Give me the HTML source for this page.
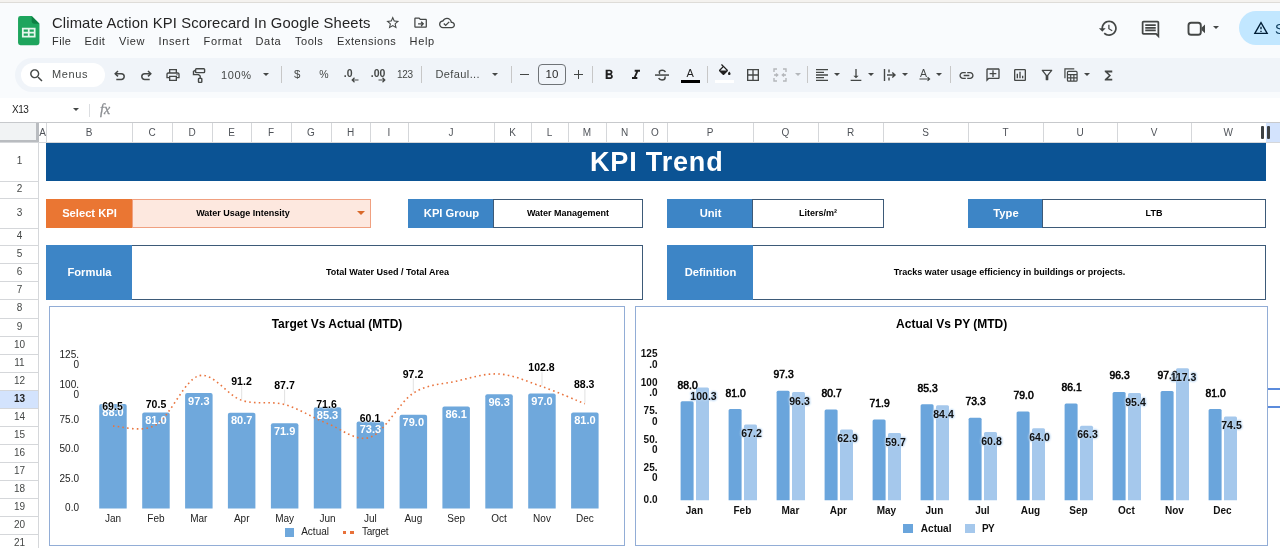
<!DOCTYPE html><html><head><meta charset="utf-8"><title>Climate Action KPI Scorecard</title><style>
*{box-sizing:border-box;margin:0;padding:0}
html,body{width:1280px;height:548px;overflow:hidden;background:#fff}
body{font-family:"Liberation Sans",sans-serif;color:#1f1f1f;position:relative}
.a{position:absolute}
.t{position:absolute;white-space:nowrap;line-height:1}
.c{transform:translateX(-50%)}
svg{position:absolute;overflow:visible}
.menu{font-size:14px;color:#1f1f1f;top:34px;letter-spacing:-0.2px}
.ch{font-size:10px;color:#50545a;top:127.500px}
.rh{font-size:10px;color:#444746;left:0;width:39px;text-align:center}
.lbl{color:#fff;font-weight:bold;font-size:11.200px;padding-bottom:1.500px;padding-left:1px;text-align:center;display:flex;align-items:center;justify-content:center;background:#3d85c6}
.val{font-weight:bold;font-size:9px;color:#000;display:flex;align-items:center;justify-content:center;background:#fff;border:1px solid #3d5a78;padding-bottom:1px}
</style></head><body><div id="root" style="position:absolute;left:0;top:0;width:1280px;height:548px;will-change:transform">
<div class="a" style="left:0;top:0;width:1280px;height:98px;background:#f9fbfd"></div>
<div class="a" style="left:0;top:0;width:1280px;height:2px;background:#f4f2ef"></div>
<div class="a" style="left:0;top:2px;width:1280px;height:1px;background:#dedcd8"></div>
<svg style="left:18px;top:16.400px" width="21.500" height="29.200" viewBox="0 0 22 30">
<path d="M2.500 0H14l8 8v19.500a2.500 2.500 0 0 1-2.500 2.500h-17A2.500 2.500 0 0 1 0 27.500V2.500A2.500 2.500 0 0 1 2.500 0z" fill="#1ea55d"/>
<path d="M14 0l8 8h-5.500A2.500 2.500 0 0 1 14 5.500z" fill="#0d8043"/>
<path d="M4 12h14v10H4zM5.800 13.800v2.300h4.300v-2.300zM11.900 13.800v2.300h4.300v-2.300zM5.800 17.900v2.300h4.300v-2.300zM11.900 17.900v2.300h4.300v-2.300z" fill="#e6f6ec" fill-rule="evenodd"/>
</svg>
<div class="t" style="left:52px;top:15.57px;font-size:14.8px;color:#242424;letter-spacing:0.131px;">Climate Action KPI Scorecard In Google Sheets</div>
<div class="t" style="left:52px;top:36.29px;font-size:11px;color:#303030;letter-spacing:0.419px;">File</div>
<div class="t" style="left:84.5px;top:36.29px;font-size:11px;color:#303030;letter-spacing:0.486px;">Edit</div>
<div class="t" style="left:119px;top:36.29px;font-size:11px;color:#303030;letter-spacing:0.564px;">View</div>
<div class="t" style="left:158.5px;top:36.29px;font-size:11px;color:#303030;letter-spacing:0.648px;">Insert</div>
<div class="t" style="left:203.5px;top:36.29px;font-size:11px;color:#303030;letter-spacing:0.677px;">Format</div>
<div class="t" style="left:255.5px;top:36.29px;font-size:11px;color:#303030;letter-spacing:0.666px;">Data</div>
<div class="t" style="left:295px;top:36.29px;font-size:11px;color:#303030;letter-spacing:0.544px;">Tools</div>
<div class="t" style="left:337px;top:36.29px;font-size:11px;color:#303030;letter-spacing:0.559px;">Extensions</div>
<div class="t" style="left:409.5px;top:36.29px;font-size:11px;color:#303030;letter-spacing:0.694px;">Help</div>
<div class="a" style="left:15px;top:57.500px;width:1300px;height:34px;border-radius:17px;background:#f0f4f9"></div>
<div class="a" style="left:21px;top:62.500px;width:84px;height:24px;border-radius:12px;background:#fff"></div>
<div class="t" style="left:52px;top:69.49px;font-size:11px;color:#444746;letter-spacing:0.597px;">Menus</div>
<div class="a" style="left:0;top:98px;width:1280px;height:24px;background:#fff"></div>
<div class="t" style="left:12px;top:104.53px;font-size:10px;color:#1f1f1f;letter-spacing:-0.431px;">X13</div>
<div class="a" style="left:72.500px;top:108px;width:0;height:0;border-left:3px solid transparent;border-right:3px solid transparent;border-top:3px solid #444746"></div>
<div class="a" style="left:89px;top:104px;width:1px;height:13px;background:#dcdee1"></div>
<div class="t" style="left:100px;top:103px;font-size:14px;color:#8a8d91;font-style:italic;-webkit-text-stroke:0.300px #8a8d91;font-family:'Liberation Serif',serif">fx</div>
<div class="a" style="left:0;top:122px;width:1280px;height:1px;background:#c7c9cc"></div>
<div class="a" style="left:0;top:123px;width:1280px;height:19px;background:#fff"></div>
<div class="a" style="left:0;top:123px;width:36px;height:19px;background:#f1f3f4"></div>
<div class="a" style="left:36px;top:123px;width:3px;height:20px;background:#b9bcc0"></div>
<div class="a" style="left:0;top:140px;width:38px;height:3px;background:#b9bcc0"></div>
<div class="a" style="left:0;top:142px;width:1280px;height:1px;background:#d5d7da"></div>
<div class="t ch c" style="left:42.5px">A</div>
<div class="a" style="left:46px;top:123px;width:1px;height:19px;background:#d5d7da"></div>
<div class="t ch c" style="left:89.0px">B</div>
<div class="a" style="left:132px;top:123px;width:1px;height:19px;background:#d5d7da"></div>
<div class="t ch c" style="left:152.0px">C</div>
<div class="a" style="left:172px;top:123px;width:1px;height:19px;background:#d5d7da"></div>
<div class="t ch c" style="left:192.0px">D</div>
<div class="a" style="left:212px;top:123px;width:1px;height:19px;background:#d5d7da"></div>
<div class="t ch c" style="left:231.5px">E</div>
<div class="a" style="left:251px;top:123px;width:1px;height:19px;background:#d5d7da"></div>
<div class="t ch c" style="left:271.0px">F</div>
<div class="a" style="left:291px;top:123px;width:1px;height:19px;background:#d5d7da"></div>
<div class="t ch c" style="left:311.0px">G</div>
<div class="a" style="left:331px;top:123px;width:1px;height:19px;background:#d5d7da"></div>
<div class="t ch c" style="left:350.5px">H</div>
<div class="a" style="left:370px;top:123px;width:1px;height:19px;background:#d5d7da"></div>
<div class="t ch c" style="left:389.0px">I</div>
<div class="a" style="left:408px;top:123px;width:1px;height:19px;background:#d5d7da"></div>
<div class="t ch c" style="left:451.0px">J</div>
<div class="a" style="left:494px;top:123px;width:1px;height:19px;background:#d5d7da"></div>
<div class="t ch c" style="left:512.5px">K</div>
<div class="a" style="left:531px;top:123px;width:1px;height:19px;background:#d5d7da"></div>
<div class="t ch c" style="left:549.5px">L</div>
<div class="a" style="left:568px;top:123px;width:1px;height:19px;background:#d5d7da"></div>
<div class="t ch c" style="left:587.0px">M</div>
<div class="a" style="left:606px;top:123px;width:1px;height:19px;background:#d5d7da"></div>
<div class="t ch c" style="left:624.5px">N</div>
<div class="a" style="left:643px;top:123px;width:1px;height:19px;background:#d5d7da"></div>
<div class="t ch c" style="left:655.0px">O</div>
<div class="a" style="left:667px;top:123px;width:1px;height:19px;background:#d5d7da"></div>
<div class="t ch c" style="left:710.0px">P</div>
<div class="a" style="left:753px;top:123px;width:1px;height:19px;background:#d5d7da"></div>
<div class="t ch c" style="left:785.5px">Q</div>
<div class="a" style="left:818px;top:123px;width:1px;height:19px;background:#d5d7da"></div>
<div class="t ch c" style="left:850.5px">R</div>
<div class="a" style="left:883px;top:123px;width:1px;height:19px;background:#d5d7da"></div>
<div class="t ch c" style="left:925.5px">S</div>
<div class="a" style="left:968px;top:123px;width:1px;height:19px;background:#d5d7da"></div>
<div class="t ch c" style="left:1005.5px">T</div>
<div class="a" style="left:1043px;top:123px;width:1px;height:19px;background:#d5d7da"></div>
<div class="t ch c" style="left:1080.0px">U</div>
<div class="a" style="left:1117px;top:123px;width:1px;height:19px;background:#d5d7da"></div>
<div class="t ch c" style="left:1154.0px">V</div>
<div class="a" style="left:1191px;top:123px;width:1px;height:19px;background:#d5d7da"></div>
<div class="t ch c" style="left:1228.25px">W</div>
<div class="a" style="left:1265.5px;top:123px;width:1px;height:19px;background:#d5d7da"></div>
<div class="a" style="left:1265.500px;top:123px;width:15px;height:19px;background:#d3e3fd"></div>
<div class="a" style="left:1260.800px;top:126px;width:2.800px;height:12.500px;background:#3c4043;border-radius:1px"></div>
<div class="a" style="left:1266.700px;top:126px;width:2.900px;height:12.500px;background:#3c4043;border-radius:1px"></div>
<div class="a" style="left:38px;top:143px;width:1px;height:405px;background:#d5d7da"></div>
<div class="t rh" style="top:156.0px;">1</div>
<div class="a" style="left:0;top:181px;width:38px;height:1px;background:#d5d7da"></div>
<div class="t rh" style="top:184.0px;">2</div>
<div class="a" style="left:0;top:198px;width:38px;height:1px;background:#d5d7da"></div>
<div class="t rh" style="top:207.5px;">3</div>
<div class="a" style="left:0;top:228px;width:38px;height:1px;background:#d5d7da"></div>
<div class="t rh" style="top:231.0px;">4</div>
<div class="a" style="left:0;top:245px;width:38px;height:1px;background:#d5d7da"></div>
<div class="t rh" style="top:248.5px;">5</div>
<div class="a" style="left:0;top:263px;width:38px;height:1px;background:#d5d7da"></div>
<div class="t rh" style="top:266.5px;">6</div>
<div class="a" style="left:0;top:281px;width:38px;height:1px;background:#d5d7da"></div>
<div class="t rh" style="top:284.5px;">7</div>
<div class="a" style="left:0;top:299px;width:38px;height:1px;background:#d5d7da"></div>
<div class="t rh" style="top:303.0px;">8</div>
<div class="a" style="left:0;top:318px;width:38px;height:1px;background:#d5d7da"></div>
<div class="t rh" style="top:321.5px;">9</div>
<div class="a" style="left:0;top:336px;width:38px;height:1px;background:#d5d7da"></div>
<div class="t rh" style="top:339.5px;">10</div>
<div class="a" style="left:0;top:354px;width:38px;height:1px;background:#d5d7da"></div>
<div class="t rh" style="top:357.5px;">11</div>
<div class="a" style="left:0;top:372px;width:38px;height:1px;background:#d5d7da"></div>
<div class="t rh" style="top:375.5px;">12</div>
<div class="a" style="left:0;top:390px;width:38px;height:1px;background:#d5d7da"></div>
<div class="a" style="left:0;top:391px;width:38px;height:17px;background:#d3e3fd"></div>
<div class="t rh" style="top:393.5px;font-weight:bold;color:#1f1f1f;">13</div>
<div class="a" style="left:0;top:408px;width:38px;height:1px;background:#d5d7da"></div>
<div class="t rh" style="top:411.5px;">14</div>
<div class="a" style="left:0;top:426px;width:38px;height:1px;background:#d5d7da"></div>
<div class="t rh" style="top:429.5px;">15</div>
<div class="a" style="left:0;top:444px;width:38px;height:1px;background:#d5d7da"></div>
<div class="t rh" style="top:447.5px;">16</div>
<div class="a" style="left:0;top:462px;width:38px;height:1px;background:#d5d7da"></div>
<div class="t rh" style="top:465.5px;">17</div>
<div class="a" style="left:0;top:480px;width:38px;height:1px;background:#d5d7da"></div>
<div class="t rh" style="top:483.5px;">18</div>
<div class="a" style="left:0;top:498px;width:38px;height:1px;background:#d5d7da"></div>
<div class="t rh" style="top:501.5px;">19</div>
<div class="a" style="left:0;top:516px;width:38px;height:1px;background:#d5d7da"></div>
<div class="t rh" style="top:519.5px;">20</div>
<div class="a" style="left:0;top:534px;width:38px;height:1px;background:#d5d7da"></div>
<div class="t rh" style="top:537.5px;">21</div>
<div class="a" style="left:0;top:552px;width:38px;height:1px;background:#d5d7da"></div>
<div class="a" style="left:46px;top:143px;width:1220px;height:38px;background:#0b5394"></div>
<div class="t" style="left:590px;top:149.14px;font-size:27px;color:#fff;font-weight:bold;letter-spacing:0.831px;">KPI Trend</div>
<div class="a lbl" style="left:46px;top:199px;width:86px;height:29px;background:#ea7633">Select KPI</div>
<div class="a val" style="left:132px;top:199px;width:239px;height:29px;background:#fde8df;border-color:#f0a080;padding-right:17px">Water Usage Intensity</div>
<div class="a" style="left:357px;top:211px;width:0;height:0;border-left:4px solid transparent;border-right:4px solid transparent;border-top:4px solid #d9692a"></div>
<div class="a lbl" style="left:408px;top:199px;width:86px;height:29px">KPI Group</div>
<div class="a val" style="left:493px;top:199px;width:150px;height:29px">Water Management</div>
<div class="a lbl" style="left:667px;top:199px;width:86px;height:29px">Unit</div>
<div class="a val" style="left:752px;top:199px;width:132px;height:29px">Liters/m²</div>
<div class="a lbl" style="left:968px;top:199px;width:75px;height:29px">Type</div>
<div class="a val" style="left:1042px;top:199px;width:224px;height:29px">LTB</div>
<div class="a val" style="left:46px;top:245px;width:597px;height:55px;padding-left:86px">Total Water Used / Total Area</div>
<div class="a lbl" style="left:46px;top:245px;width:86px;height:55px">Formula</div>
<div class="a val" style="left:667px;top:245px;width:599px;height:55px;padding-left:86px">Tracks water usage efficiency in buildings or projects.</div>
<div class="a lbl" style="left:667px;top:245px;width:86px;height:55px">Definition</div>
<div class="a" style="left:1267px;top:388px;width:13px;height:2px;background:#5b8bdc"></div>
<div class="a" style="left:1267px;top:406px;width:13px;height:2px;background:#5b8bdc"></div>
<div class="a" style="left:49px;top:306px;width:576px;height:240px;background:#fff;border:1px solid #92add6"></div>
<div class="t c" style="left:337px;top:318px;font-size:12px;font-weight:bold;color:#000">Target Vs Actual (MTD)</div>
<div class="t" style="left:56px;width:23px;text-align:right;top:350.1px;font-size:10px;line-height:10px;color:#222">125.<br>0</div>
<div class="t" style="left:56px;width:23px;text-align:right;top:379.6px;font-size:10px;line-height:10px;color:#222">100.<br>0</div>
<div class="t" style="left:56px;width:23px;text-align:right;top:415.1px;font-size:10px;line-height:10px;color:#222">75.0</div>
<div class="t" style="left:56px;width:23px;text-align:right;top:443.6px;font-size:10px;line-height:10px;color:#222">50.0</div>
<div class="t" style="left:56px;width:23px;text-align:right;top:474.1px;font-size:10px;line-height:10px;color:#222">25.0</div>
<div class="t" style="left:56px;width:23px;text-align:right;top:503.4px;font-size:10px;line-height:10px;color:#222">0.0</div>
<svg style="left:0;top:0" width="1280" height="548" viewBox="0 0 1280 548"><path d="M99.2 508.5V406.1q0 -2 2 -2h23.5q2 0 2 2V508.5z" fill="#6fa8dc"/><path d="M142.2 508.5V414.4q0 -2 2 -2h23.5q2 0 2 2V508.5z" fill="#6fa8dc"/><path d="M185.1 508.5V395.1q0 -2 2 -2h23.5q2 0 2 2V508.5z" fill="#6fa8dc"/><path d="M227.9 508.5V414.8q0 -2 2 -2h23.5q2 0 2 2V508.5z" fill="#6fa8dc"/><path d="M270.9 508.5V425.2q0 -2 2 -2h23.5q2 0 2 2V508.5z" fill="#6fa8dc"/><path d="M313.8 508.5V409.3q0 -2 2 -2h23.5q2 0 2 2V508.5z" fill="#6fa8dc"/><path d="M356.6 508.5V423.6q0 -2 2 -2h23.5q2 0 2 2V508.5z" fill="#6fa8dc"/><path d="M399.6 508.5V416.8q0 -2 2 -2h23.5q2 0 2 2V508.5z" fill="#6fa8dc"/><path d="M442.4 508.5V408.4q0 -2 2 -2h23.5q2 0 2 2V508.5z" fill="#6fa8dc"/><path d="M485.3 508.5V396.3q0 -2 2 -2h23.5q2 0 2 2V508.5z" fill="#6fa8dc"/><path d="M528.2 508.5V395.5q0 -2 2 -2h23.5q2 0 2 2V508.5z" fill="#6fa8dc"/><path d="M571.1 508.5V414.4q0 -2 2 -2h23.5q2 0 2 2V508.5z" fill="#6fa8dc"/><path d="M113.0 426.1C120.2 425.9 141.6 433.3 155.9 424.9C170.2 416.5 184.5 379.9 198.8 375.8C213.1 371.7 227.4 395.6 241.7 400.3C256.0 405.1 270.3 400.6 284.6 404.5C298.9 408.4 313.2 418.1 327.5 423.6C341.8 429.0 356.1 442.3 370.4 437.2C384.7 432.2 399.0 402.6 413.3 393.2C427.6 383.9 441.9 384.4 456.2 381.2C470.5 378.0 484.8 373.1 499.1 374.0C513.4 374.9 527.7 381.6 542.0 386.6C556.3 391.5 577.8 400.9 584.9 403.8" fill="none" stroke="#e9753f" stroke-width="1.600" stroke-dasharray="1.600 3.200"/><path d="M241.7 399.3V385.3" stroke="#d9d9d9" stroke-width="0.800"/><path d="M284.6 403.5V389.5" stroke="#d9d9d9" stroke-width="0.800"/><path d="M413.3 392.2V378.2" stroke="#d9d9d9" stroke-width="0.800"/><path d="M542.0 385.6V371.6" stroke="#d9d9d9" stroke-width="0.800"/><path d="M584.9 402.8V388.8" stroke="#d9d9d9" stroke-width="0.800"/></svg>
<div class="t c" style="left:113.0px;top:406.7px;font-size:11px;font-weight:bold;color:#fff">88.0</div>
<div class="t c" style="left:113.0px;top:513.600px;font-size:10px;color:#222">Jan</div>
<div class="t c" style="left:155.9px;top:415.0px;font-size:11px;font-weight:bold;color:#fff">81.0</div>
<div class="t c" style="left:155.9px;top:513.600px;font-size:10px;color:#222">Feb</div>
<div class="t c" style="left:198.8px;top:395.7px;font-size:11px;font-weight:bold;color:#fff">97.3</div>
<div class="t c" style="left:198.8px;top:513.600px;font-size:10px;color:#222">Mar</div>
<div class="t c" style="left:241.7px;top:415.4px;font-size:11px;font-weight:bold;color:#fff">80.7</div>
<div class="t c" style="left:241.7px;top:513.600px;font-size:10px;color:#222">Apr</div>
<div class="t c" style="left:284.6px;top:425.8px;font-size:11px;font-weight:bold;color:#fff">71.9</div>
<div class="t c" style="left:284.6px;top:513.600px;font-size:10px;color:#222">May</div>
<div class="t c" style="left:327.5px;top:409.9px;font-size:11px;font-weight:bold;color:#fff">85.3</div>
<div class="t c" style="left:327.5px;top:513.600px;font-size:10px;color:#222">Jun</div>
<div class="t c" style="left:370.4px;top:424.2px;font-size:11px;font-weight:bold;color:#fff">73.3</div>
<div class="t c" style="left:370.4px;top:513.600px;font-size:10px;color:#222">Jul</div>
<div class="t c" style="left:413.3px;top:417.4px;font-size:11px;font-weight:bold;color:#fff">79.0</div>
<div class="t c" style="left:413.3px;top:513.600px;font-size:10px;color:#222">Aug</div>
<div class="t c" style="left:456.2px;top:409.0px;font-size:11px;font-weight:bold;color:#fff">86.1</div>
<div class="t c" style="left:456.2px;top:513.600px;font-size:10px;color:#222">Sep</div>
<div class="t c" style="left:499.1px;top:396.9px;font-size:11px;font-weight:bold;color:#fff">96.3</div>
<div class="t c" style="left:499.1px;top:513.600px;font-size:10px;color:#222">Oct</div>
<div class="t c" style="left:542.0px;top:396.1px;font-size:11px;font-weight:bold;color:#fff">97.0</div>
<div class="t c" style="left:542.0px;top:513.600px;font-size:10px;color:#222">Nov</div>
<div class="t c" style="left:584.9px;top:415.0px;font-size:11px;font-weight:bold;color:#fff">81.0</div>
<div class="t c" style="left:584.9px;top:513.600px;font-size:10px;color:#222">Dec</div>
<div class="t c" style="left:112.5px;top:401px;font-size:10.500px;font-weight:bold;color:#000;text-shadow:0 0 2px #fff,0 0 2px #fff,0 0 1px #fff">69.5</div>
<div class="t c" style="left:156px;top:399px;font-size:10.500px;font-weight:bold;color:#000;text-shadow:0 0 2px #fff,0 0 2px #fff,0 0 1px #fff">70.5</div>
<div class="t c" style="left:241.5px;top:376px;font-size:10.500px;font-weight:bold;color:#000;text-shadow:0 0 2px #fff,0 0 2px #fff,0 0 1px #fff">91.2</div>
<div class="t c" style="left:284.5px;top:379.5px;font-size:10.500px;font-weight:bold;color:#000;text-shadow:0 0 2px #fff,0 0 2px #fff,0 0 1px #fff">87.7</div>
<div class="t c" style="left:326.5px;top:398.5px;font-size:10.500px;font-weight:bold;color:#000;text-shadow:0 0 2px #fff,0 0 2px #fff,0 0 1px #fff">71.6</div>
<div class="t c" style="left:370px;top:412.5px;font-size:10.500px;font-weight:bold;color:#000;text-shadow:0 0 2px #fff,0 0 2px #fff,0 0 1px #fff">60.1</div>
<div class="t c" style="left:413px;top:368.7px;font-size:10.500px;font-weight:bold;color:#000;text-shadow:0 0 2px #fff,0 0 2px #fff,0 0 1px #fff">97.2</div>
<div class="t c" style="left:541.5px;top:361.7px;font-size:10.500px;font-weight:bold;color:#000;text-shadow:0 0 2px #fff,0 0 2px #fff,0 0 1px #fff">102.8</div>
<div class="t c" style="left:584.2px;top:379.2px;font-size:10.500px;font-weight:bold;color:#000;text-shadow:0 0 2px #fff,0 0 2px #fff,0 0 1px #fff">88.3</div>
<div class="a" style="left:284.500px;top:527.500px;width:9.500px;height:9.500px;background:#6fa8dc"></div>
<div class="t" style="left:301.2px;top:526.63px;font-size:10px;color:#222;letter-spacing:0.001px;">Actual</div>
<div class="a" style="left:342.500px;top:530.700px;width:3.400px;height:3.300px;background:#e8713a"></div>
<div class="a" style="left:350.400px;top:530.700px;width:3.400px;height:3.300px;background:#e8713a"></div>
<div class="t" style="left:361.9px;top:526.63px;font-size:10px;color:#222;letter-spacing:-0.232px;">Target</div>
<div class="a" style="left:635px;top:306px;width:632.500px;height:240px;background:#fff;border:1px solid #92add6"></div>
<div class="t c" style="left:951.700px;top:318px;font-size:12px;font-weight:bold;color:#000">Actual Vs PY (MTD)</div>
<div class="t" style="left:637px;width:20.500px;text-align:right;top:349.2px;font-size:10px;line-height:10.500px;font-weight:bold;color:#111">125<br>.0</div>
<div class="t" style="left:637px;width:20.500px;text-align:right;top:377.7px;font-size:10px;line-height:10.500px;font-weight:bold;color:#111">100<br>.0</div>
<div class="t" style="left:637px;width:20.500px;text-align:right;top:406.4px;font-size:10px;line-height:10.500px;font-weight:bold;color:#111">75.<br>0</div>
<div class="t" style="left:637px;width:20.500px;text-align:right;top:434.5px;font-size:10px;line-height:10.500px;font-weight:bold;color:#111">50.<br>0</div>
<div class="t" style="left:637px;width:20.500px;text-align:right;top:462.7px;font-size:10px;line-height:10.500px;font-weight:bold;color:#111">25.<br>0</div>
<div class="t" style="left:637px;width:20.500px;text-align:right;top:495.2px;font-size:10px;line-height:10.500px;font-weight:bold;color:#111">0.0</div>
<svg style="left:0;top:0" width="1280" height="548" viewBox="0 0 1280 548"><path d="M680.6 500.25V402.8q0 -1.500 1.500 -1.500h10q1.500 0 1.500 1.500V500.25z" fill="#6aa5dc"/><path d="M696 500.25V388.9q0 -1.500 1.500 -1.500h10q1.500 0 1.500 1.500V500.25z" fill="#a5c8ec"/><path d="M728.6 500.25V410.6q0 -1.500 1.500 -1.500h10q1.500 0 1.500 1.500V500.25z" fill="#6aa5dc"/><path d="M744 500.25V426.1q0 -1.500 1.500 -1.500h10q1.500 0 1.500 1.500V500.25z" fill="#a5c8ec"/><path d="M776.6 500.25V392.3q0 -1.500 1.500 -1.500h10q1.500 0 1.500 1.500V500.25z" fill="#6aa5dc"/><path d="M792 500.25V393.4q0 -1.500 1.500 -1.500h10q1.500 0 1.500 1.500V500.25z" fill="#a5c8ec"/><path d="M824.6 500.25V411.0q0 -1.500 1.500 -1.500h10q1.500 0 1.500 1.500V500.25z" fill="#6aa5dc"/><path d="M840 500.25V431.0q0 -1.500 1.500 -1.500h10q1.500 0 1.500 1.500V500.25z" fill="#a5c8ec"/><path d="M872.6 500.25V420.9q0 -1.500 1.500 -1.500h10q1.500 0 1.500 1.500V500.25z" fill="#6aa5dc"/><path d="M888 500.25V434.6q0 -1.500 1.500 -1.500h10q1.500 0 1.500 1.500V500.25z" fill="#a5c8ec"/><path d="M920.6 500.25V405.8q0 -1.500 1.500 -1.500h10q1.500 0 1.500 1.500V500.25z" fill="#6aa5dc"/><path d="M936 500.25V406.8q0 -1.500 1.500 -1.500h10q1.500 0 1.500 1.500V500.25z" fill="#a5c8ec"/><path d="M968.6 500.25V419.3q0 -1.500 1.500 -1.500h10q1.500 0 1.500 1.500V500.25z" fill="#6aa5dc"/><path d="M984 500.25V433.4q0 -1.500 1.500 -1.500h10q1.500 0 1.500 1.500V500.25z" fill="#a5c8ec"/><path d="M1016.6 500.25V412.9q0 -1.500 1.500 -1.500h10q1.500 0 1.500 1.500V500.25z" fill="#6aa5dc"/><path d="M1032 500.25V429.8q0 -1.500 1.500 -1.500h10q1.500 0 1.500 1.500V500.25z" fill="#a5c8ec"/><path d="M1064.6 500.25V404.9q0 -1.500 1.500 -1.500h10q1.500 0 1.500 1.500V500.25z" fill="#6aa5dc"/><path d="M1080 500.25V427.2q0 -1.500 1.500 -1.500h10q1.500 0 1.500 1.500V500.25z" fill="#a5c8ec"/><path d="M1112.6 500.25V393.4q0 -1.500 1.500 -1.500h10q1.500 0 1.500 1.500V500.25z" fill="#6aa5dc"/><path d="M1128 500.25V394.4q0 -1.500 1.500 -1.500h10q1.500 0 1.500 1.500V500.25z" fill="#a5c8ec"/><path d="M1160.6 500.25V392.6q0 -1.500 1.500 -1.500h10q1.500 0 1.500 1.500V500.25z" fill="#6aa5dc"/><path d="M1176 500.25V369.8q0 -1.500 1.500 -1.500h10q1.500 0 1.500 1.500V500.25z" fill="#a5c8ec"/><path d="M1208.6 500.25V410.6q0 -1.500 1.500 -1.500h10q1.500 0 1.500 1.500V500.25z" fill="#6aa5dc"/><path d="M1224 500.25V417.9q0 -1.500 1.500 -1.500h10q1.500 0 1.500 1.500V500.25z" fill="#a5c8ec"/></svg>
<div class="t c" style="left:687.6px;top:380.8px;font-size:10.300px;color:#000;-webkit-text-stroke:0.550px #000">88.0</div>
<div class="t c" style="left:703.5px;top:391.0px;font-size:10.500px;font-weight:bold;color:#111;text-shadow:0 0 2px #b9d4ef,0 0 2px #b9d4ef,0 0 3px #b9d4ef,0 0 3px #b9d4ef">100.3</div>
<div class="t c" style="left:694.4px;top:505.600px;font-size:10px;font-weight:bold;color:#111">Jan</div>
<div class="t c" style="left:735.6px;top:388.6px;font-size:10.300px;color:#000;-webkit-text-stroke:0.550px #000">81.0</div>
<div class="t c" style="left:751.5px;top:428.2px;font-size:10.500px;font-weight:bold;color:#111;text-shadow:0 0 2px #b9d4ef,0 0 2px #b9d4ef,0 0 3px #b9d4ef,0 0 3px #b9d4ef">67.2</div>
<div class="t c" style="left:742.4px;top:505.600px;font-size:10px;font-weight:bold;color:#111">Feb</div>
<div class="t c" style="left:783.6px;top:370.3px;font-size:10.300px;color:#000;-webkit-text-stroke:0.550px #000">97.3</div>
<div class="t c" style="left:799.5px;top:395.5px;font-size:10.500px;font-weight:bold;color:#111;text-shadow:0 0 2px #b9d4ef,0 0 2px #b9d4ef,0 0 3px #b9d4ef,0 0 3px #b9d4ef">96.3</div>
<div class="t c" style="left:790.4px;top:505.600px;font-size:10px;font-weight:bold;color:#111">Mar</div>
<div class="t c" style="left:831.6px;top:389.0px;font-size:10.300px;color:#000;-webkit-text-stroke:0.550px #000">80.7</div>
<div class="t c" style="left:847.5px;top:433.1px;font-size:10.500px;font-weight:bold;color:#111;text-shadow:0 0 2px #b9d4ef,0 0 2px #b9d4ef,0 0 3px #b9d4ef,0 0 3px #b9d4ef">62.9</div>
<div class="t c" style="left:838.4px;top:505.600px;font-size:10px;font-weight:bold;color:#111">Apr</div>
<div class="t c" style="left:879.6px;top:398.9px;font-size:10.300px;color:#000;-webkit-text-stroke:0.550px #000">71.9</div>
<div class="t c" style="left:895.5px;top:436.7px;font-size:10.500px;font-weight:bold;color:#111;text-shadow:0 0 2px #b9d4ef,0 0 2px #b9d4ef,0 0 3px #b9d4ef,0 0 3px #b9d4ef">59.7</div>
<div class="t c" style="left:886.4px;top:505.600px;font-size:10px;font-weight:bold;color:#111">May</div>
<div class="t c" style="left:927.6px;top:383.8px;font-size:10.300px;color:#000;-webkit-text-stroke:0.550px #000">85.3</div>
<div class="t c" style="left:943.5px;top:408.9px;font-size:10.500px;font-weight:bold;color:#111;text-shadow:0 0 2px #b9d4ef,0 0 2px #b9d4ef,0 0 3px #b9d4ef,0 0 3px #b9d4ef">84.4</div>
<div class="t c" style="left:934.4px;top:505.600px;font-size:10px;font-weight:bold;color:#111">Jun</div>
<div class="t c" style="left:975.6px;top:397.3px;font-size:10.300px;color:#000;-webkit-text-stroke:0.550px #000">73.3</div>
<div class="t c" style="left:991.5px;top:435.5px;font-size:10.500px;font-weight:bold;color:#111;text-shadow:0 0 2px #b9d4ef,0 0 2px #b9d4ef,0 0 3px #b9d4ef,0 0 3px #b9d4ef">60.8</div>
<div class="t c" style="left:982.4px;top:505.600px;font-size:10px;font-weight:bold;color:#111">Jul</div>
<div class="t c" style="left:1023.6px;top:390.9px;font-size:10.300px;color:#000;-webkit-text-stroke:0.550px #000">79.0</div>
<div class="t c" style="left:1039.5px;top:431.9px;font-size:10.500px;font-weight:bold;color:#111;text-shadow:0 0 2px #b9d4ef,0 0 2px #b9d4ef,0 0 3px #b9d4ef,0 0 3px #b9d4ef">64.0</div>
<div class="t c" style="left:1030.4px;top:505.600px;font-size:10px;font-weight:bold;color:#111">Aug</div>
<div class="t c" style="left:1071.6px;top:382.9px;font-size:10.300px;color:#000;-webkit-text-stroke:0.550px #000">86.1</div>
<div class="t c" style="left:1087.5px;top:429.3px;font-size:10.500px;font-weight:bold;color:#111;text-shadow:0 0 2px #b9d4ef,0 0 2px #b9d4ef,0 0 3px #b9d4ef,0 0 3px #b9d4ef">66.3</div>
<div class="t c" style="left:1078.4px;top:505.600px;font-size:10px;font-weight:bold;color:#111">Sep</div>
<div class="t c" style="left:1119.6px;top:371.4px;font-size:10.300px;color:#000;-webkit-text-stroke:0.550px #000">96.3</div>
<div class="t c" style="left:1135.5px;top:396.5px;font-size:10.500px;font-weight:bold;color:#111;text-shadow:0 0 2px #b9d4ef,0 0 2px #b9d4ef,0 0 3px #b9d4ef,0 0 3px #b9d4ef">95.4</div>
<div class="t c" style="left:1126.4px;top:505.600px;font-size:10px;font-weight:bold;color:#111">Oct</div>
<div class="t c" style="left:1167.6px;top:370.6px;font-size:10.300px;color:#000;-webkit-text-stroke:0.550px #000">97.0</div>
<div class="t c" style="left:1183.5px;top:371.9px;font-size:10.500px;font-weight:bold;color:#111;text-shadow:0 0 2px #b9d4ef,0 0 2px #b9d4ef,0 0 3px #b9d4ef,0 0 3px #b9d4ef">117.3</div>
<div class="t c" style="left:1174.4px;top:505.600px;font-size:10px;font-weight:bold;color:#111">Nov</div>
<div class="t c" style="left:1215.6px;top:388.6px;font-size:10.300px;color:#000;-webkit-text-stroke:0.550px #000">81.0</div>
<div class="t c" style="left:1231.5px;top:420.0px;font-size:10.500px;font-weight:bold;color:#111;text-shadow:0 0 2px #b9d4ef,0 0 2px #b9d4ef,0 0 3px #b9d4ef,0 0 3px #b9d4ef">74.5</div>
<div class="t c" style="left:1222.4px;top:505.600px;font-size:10px;font-weight:bold;color:#111">Dec</div>
<div class="a" style="left:903.300px;top:523.500px;width:10px;height:9.500px;background:#6aa5dc"></div>
<div class="t" style="left:920.8px;top:523.74px;font-size:10px;color:#111;font-weight:bold;letter-spacing:0.023px;">Actual</div>
<div class="a" style="left:965px;top:523.500px;width:9.800px;height:9.500px;background:#a5c8ec"></div>
<div class="t" style="left:982px;top:523.74px;font-size:10px;color:#111;font-weight:bold;letter-spacing:-0.670px;">PY</div>
<svg style="left:385.25px;top:14.65px" width="15.5" height="15.5" viewBox="0 0 24 24" fill="#444746" ><path d="M22 9.24l-7.19-.62L12 2 9.190 8.630 2 9.240l5.460 4.730L5.820 21 12 17.270 18.180 21l-1.630-7.030L22 9.240zM12 15.400l-3.760 2.270 1-4.280-3.320-2.880 4.380-.38L12 6.100l1.710 4.040 4.380.38-3.320 2.880 1 4.280L12 15.400z"/></svg>
<svg style="left:412.70px;top:15.30px" width="15.2" height="15.2" viewBox="0 0 24 24" fill="#444746" ><path d="M20 6h-8l-2-2H4c-1.100 0-2 .9-2 2v12c0 1.100.9 2 2 2h16c1.100 0 2-.9 2-2V8c0-1.100-.9-2-2-2zm0 12H4V6h5.170l2 2H20v10zM12.160 16.590 13.580 18l4-4-4-4-1.420 1.410L13.750 13H8v2h5.750z"/></svg>
<svg style="left:439.30px;top:14.70px" width="16" height="16" viewBox="0 0 24 24" fill="#444746" ><path d="M19.350 10.040C18.670 6.590 15.640 4 12 4 9.110 4 6.600 5.640 5.350 8.040 2.340 8.360 0 10.910 0 14c0 3.310 2.690 6 6 6h13c2.760 0 5-2.240 5-5 0-2.640-2.050-4.780-4.650-4.960zM19 18H6c-2.210 0-4-1.790-4-4 0-2.050 1.530-3.760 3.560-3.970l1.070-.11.5-.95C8.080 7.140 9.940 6 12 6c2.620 0 4.880 1.860 5.390 4.430l.3 1.500 1.530.11c1.560.1 2.780 1.410 2.780 2.960 0 1.650-1.350 3-3 3zm-9-3.820l-2.090-2.090L6.500 13.500 10 17l6.010-6.010-1.410-1.410z"/></svg>
<svg style="left:1097.75px;top:17.75px" width="20.5" height="20.5" viewBox="0 0 24 24" fill="#444746" ><path d="M13 3c-4.970 0-9 4.030-9 9H1l3.890 3.890.07.14L9 12H6c0-3.870 3.130-7 7-7s7 3.130 7 7-3.130 7-7 7c-1.930 0-3.680-.79-4.940-2.060l-1.420 1.420C8.270 19.990 10.510 21 13 21c4.970 0 9-4.030 9-9s-4.030-9-9-9zm-1 5v5l4.280 2.540.72-1.210-3.500-2.080V8H12z"/></svg>
<svg style="left:1139.50px;top:18.50px" width="21" height="21" viewBox="0 0 24 24" fill="#444746" ><path d="M21.990 4c0-1.100-.89-2-1.990-2H4c-1.100 0-2 .9-2 2v12c0 1.100.9 2 2 2h14l4 4-.01-18zM20 4v13.170L18.830 16H4V4h16zM6 12h12v2H6zm0-3h12v2H6zm0-3h12v2H6z"/></svg>
<svg style="left:0;top:0" width="1280" height="548" viewBox="0 0 1280 548"><rect x="1188.500" y="22.800" width="12.300" height="12" rx="2.600" fill="none" stroke="#444746" stroke-width="1.900"/><path d="M1201.500 27.800 1205 24.600v8.600l-3.500-3.200z" fill="#444746"/></svg>
<div class="a" style="left:1212.5px;top:25.75px;width:0;height:0;border-left:3.5px solid transparent;border-right:3.5px solid transparent;border-top:3.5px solid #444746"></div>
<div class="a" style="left:1239px;top:11px;width:80px;height:34px;border-radius:17px;background:#c2e7ff"></div>
<svg style="left:1253.00px;top:20.20px" width="16" height="16" viewBox="0 0 24 24" fill="#001d35" ><path d="M12 5.990L19.530 19H4.470L12 5.990M12 2L1 21h22L12 2zm1 14h-2v2h2v-2zm0-6h-2v4h2v-4z"/></svg>
<div class="t" style="left:1275px;top:22px;font-size:14px;color:#0a3a5c">S</div>
<svg style="left:27.50px;top:66.50px" width="17" height="17" viewBox="0 0 24 24" fill="#444746" ><path d="M15.500 14h-.79l-.28-.27C15.410 12.590 16 11.110 16 9.500 16 5.910 13.090 3 9.500 3S3 5.910 3 9.500 5.910 16 9.500 16c1.610 0 3.090-.59 4.230-1.570l.27.28v.79l5 4.990L20.490 19l-4.990-5zm-6 0C7.010 14 5 11.990 5 9.500S7.010 5 9.500 5 14 7.010 14 9.500 11.990 14 9.500 14z"/></svg>
<svg style="left:0;top:0" width="1280" height="548" viewBox="0 0 1280 548" fill="none" stroke="#444746" stroke-width="1.500"><path d="M116.300 79.500H121.300A2.900 2.900 0 0 0 121.300 73.700H115.600"/><path d="M118 71 115.200 73.700 118 76.400"/><path d="M149.700 79.500H144.700A2.900 2.900 0 0 1 144.700 73.700H150.400"/><path d="M148 71 150.800 73.700 148 76.400"/></svg>
<svg style="left:165.00px;top:66.50px" width="16" height="16" viewBox="0 0 24 24" fill="#444746" ><path d="M19 8h-1V3H6v5H5c-1.660 0-3 1.340-3 3v6h4v4h12v-4h4v-6c0-1.660-1.340-3-3-3zM8 5h8v3H8V5zm8 14H8v-4h8v4zm2-4v-2H6v2H4v-4c0-.55.45-1 1-1h14c.55 0 1 .45 1 1v4h-2z"/><circle cx="18" cy="11.500" r="1"/></svg>
<svg style="left:0;top:0" width="1280" height="548" viewBox="0 0 1280 548" fill="none" stroke="#444746" stroke-width="1.400"><rect x="195.600" y="68.700" width="9" height="3.900" rx="0.800"/><path d="M195.600 70.200 193.500 71.400V74.600H198.600L200.200 76V78.400"/><rect x="198.500" y="78.400" width="3.300" height="4" rx="0.600"/></svg>
<div class="t" style="left:221px;top:69.69px;font-size:11px;color:#444746;letter-spacing:0.591px;">100%</div>
<div class="a" style="left:262.5px;top:72.75px;width:0;height:0;border-left:3.5px solid transparent;border-right:3.5px solid transparent;border-top:3.5px solid #444746"></div>
<div class="a" style="left:281.0px;top:66px;width:1px;height:17px;background:#c7c7c7"></div>
<div class="t c" style="left:297.200px;top:68.500px;font-size:11.500px;color:#444746">$</div>
<div class="t c" style="left:324px;top:69px;font-size:10.500px;color:#444746">%</div>
<div class="t" style="left:343.800px;top:67.800px;font-size:10.500px;font-weight:bold;color:#444746">.0</div>
<svg style="left:350.500px;top:76.700px" width="8" height="6" viewBox="0 0 8 6"><path d="M7.500 3H1.500M3.500 .8 1.200 3l2.300 2.200" fill="none" stroke="#444746" stroke-width="1.200"/></svg>
<div class="t" style="left:370.800px;top:67.800px;font-size:10.500px;font-weight:bold;color:#444746">.00</div>
<svg style="left:377.500px;top:76.700px" width="8" height="6" viewBox="0 0 8 6"><path d="M.5 3H6.500M4.500 .8 6.800 3 4.500 5.200" fill="none" stroke="#444746" stroke-width="1.200"/></svg>
<div class="t c" style="left:405px;top:70px;font-size:10px;color:#444746;letter-spacing:-0.300px">123</div>
<div class="a" style="left:421.3px;top:66px;width:1px;height:17px;background:#c7c7c7"></div>
<div class="t" style="left:435.5px;top:69.49px;font-size:11px;color:#444746;letter-spacing:0.393px;">Defaul...</div>
<div class="a" style="left:491.5px;top:72.75px;width:0;height:0;border-left:3.5px solid transparent;border-right:3.5px solid transparent;border-top:3.5px solid #444746"></div>
<div class="a" style="left:510.5px;top:66px;width:1px;height:17px;background:#c7c7c7"></div>
<div class="a" style="left:520.200px;top:74.200px;width:8.600px;height:1.300px;background:#444746"></div>
<div class="a" style="left:538px;top:64px;width:28px;height:21px;border:1px solid #6f7377;border-radius:4px"></div>
<div class="t c" style="left:552px;top:69.200px;font-size:11.500px;color:#2a2a2a">10</div>
<div class="a" style="left:574px;top:74.200px;width:9px;height:1.300px;background:#444746"></div>
<div class="a" style="left:577.850px;top:70.350px;width:1.300px;height:9px;background:#444746"></div>
<div class="a" style="left:592.0px;top:66px;width:1px;height:17px;background:#c7c7c7"></div>
<svg style="left:601.00px;top:67.00px" width="16" height="16" viewBox="0 0 24 24" fill="#1f1f1f" ><path d="M15.600 10.790c.97-.67 1.650-1.770 1.650-2.790 0-2.260-1.750-4-4-4H7v14h7.040c2.090 0 3.710-1.700 3.710-3.790 0-1.520-.86-2.820-2.150-3.420zM10 6.500h3c.83 0 1.500.67 1.500 1.500s-.67 1.500-1.500 1.500h-3v-3zm3.500 9H10v-3h3.500c.83 0 1.500.67 1.500 1.500s-.67 1.500-1.500 1.500z"/></svg>
<svg style="left:628.00px;top:67.00px" width="16" height="16" viewBox="0 0 24 24" fill="#1f1f1f" ><path d="M10 4v3h2.210l-3.420 8H6v3h8v-3h-2.210l3.420-8H18V4z"/></svg>
<svg style="left:654px;top:67px" width="16" height="16" viewBox="0 0 16 16"><path d="M11.300 5.200C11 3.900 9.800 3.200 8.200 3.200 6.500 3.200 5.300 4 5.300 5.300c0 .6.3 1.100.8 1.400M4.700 11c.4 1.200 1.600 1.900 3.300 1.900 1.900 0 3.100-.8 3.100-2.100 0-.5-.2-.9-.5-1.200" fill="none" stroke="#444746" stroke-width="1.500"/><rect x="1" y="7.300" width="14" height="1.500" fill="#444746"/></svg>
<div class="t c" style="left:690.200px;top:68px;font-size:11px;color:#1f1f1f">A</div>
<div class="a" style="left:681px;top:79.500px;width:19px;height:3px;background:#000"></div>
<div class="a" style="left:707.0px;top:66px;width:1px;height:17px;background:#c7c7c7"></div>
<svg style="left:717.25px;top:64.45px" width="15.5" height="15.5" viewBox="0 0 24 24" fill="#1f1f1f" ><path d="M16.560 8.940L7.620 0 6.210 1.410l2.380 2.380-5.150 5.150c-.59.59-.59 1.540 0 2.120l5.500 5.500c.29.29.68.44 1.060.44s.77-.15 1.060-.44l5.500-5.500c.59-.58.59-1.530 0-2.120zM5.210 10L10 5.210 14.790 10H5.210zM19 11.500s-2 2.170-2 3.500c0 1.100.9 2 2 2s2-.9 2-2c0-1.330-2-3.500-2-3.500z"/></svg>
<div class="a" style="left:715px;top:79.500px;width:19px;height:3px;background:#fff"></div>
<svg style="left:744.50px;top:67.00px" width="16" height="16" viewBox="0 0 24 24" fill="#444746" ><path d="M3 3v18h18V3H3zm8 16H5v-6h6v6zm0-8H5V5h6v6zm8 8h-6v-6h6v6zm0-8h-6V5h6v6z"/></svg>
<svg style="left:773px;top:68px" width="14" height="14" viewBox="0 0 14 14" fill="none" stroke="#b4b7bb" stroke-width="1.400"><path d="M4 1H1v3M10 1h3v3M4 13H1v-3M10 13h3v-3M1 7h3.500M3 5.500 4.700 7 3 8.500M13 7H9.500M11 5.500 9.300 7 11 8.500"/></svg>
<div class="a" style="left:794.5px;top:72.75px;width:0;height:0;border-left:3.5px solid transparent;border-right:3.5px solid transparent;border-top:3.5px solid #b4b7bb"></div>
<div class="a" style="left:806.5px;top:66px;width:1px;height:17px;background:#c7c7c7"></div>
<svg style="left:813.50px;top:67.00px" width="16" height="16" viewBox="0 0 24 24" fill="#444746" ><path d="M15 15H3v2h12v-2zm0-8H3v2h12V7zM3 13h18v-2H3v2zm0 8h18v-2H3v2zM3 3v2h18V3H3z"/></svg>
<div class="a" style="left:833.5px;top:72.75px;width:0;height:0;border-left:3.5px solid transparent;border-right:3.5px solid transparent;border-top:3.5px solid #444746"></div>
<svg style="left:847.50px;top:67.00px" width="16" height="16" viewBox="0 0 24 24" fill="#444746" ><path d="M16 13h-3V3h-2v10H8l4 4 4-4zM4 19v2h16v-2H4z"/></svg>
<div class="a" style="left:867.5px;top:72.75px;width:0;height:0;border-left:3.5px solid transparent;border-right:3.5px solid transparent;border-top:3.5px solid #444746"></div>
<svg style="left:882.500px;top:68px" width="14" height="14" viewBox="0 0 14 14" fill="none" stroke="#444746" stroke-width="1.400"><path d="M1.500 1v12M6 1.500v3M6 9.500v3M4 7h7.500M9.300 4.500 12 7 9.300 9.500"/></svg>
<div class="a" style="left:902.0px;top:72.75px;width:0;height:0;border-left:3.5px solid transparent;border-right:3.5px solid transparent;border-top:3.5px solid #444746"></div>
<div class="t c" style="left:923.500px;top:67.500px;font-size:10.500px;color:#444746">A</div>
<svg style="left:918.500px;top:76px" width="12" height="6" viewBox="0 0 14 6" fill="none" stroke="#444746" stroke-width="1.300"><path d="M.5 3H12M10 .8 12.400 3 10 5.200"/></svg>
<div class="a" style="left:936.0px;top:72.75px;width:0;height:0;border-left:3.5px solid transparent;border-right:3.5px solid transparent;border-top:3.5px solid #444746"></div>
<div class="a" style="left:949.5px;top:66px;width:1px;height:17px;background:#c7c7c7"></div>
<svg style="left:957.50px;top:66.50px" width="17" height="17" viewBox="0 0 24 24" fill="#444746" ><path d="M3.900 12c0-1.710 1.390-3.100 3.100-3.100h4V7H7c-2.760 0-5 2.240-5 5s2.240 5 5 5h4v-1.900H7c-1.710 0-3.100-1.390-3.100-3.100zM8 13h8v-2H8v2zm9-6h-4v1.900h4c1.710 0 3.100 1.390 3.100 3.100s-1.390 3.100-3.100 3.100h-4V17h4c2.760 0 5-2.240 5-5s-2.240-5-5-5z"/></svg>
<svg style="left:984.500px;top:66.700px;transform:scaleX(-1)" width="16" height="16" viewBox="0 0 24 24" fill="#444746"><path d="M22 4c0-1.100-.9-2-2-2H4c-1.100 0-2 .9-2 2v12c0 1.100.9 2 2 2h14l4 4V4zm-2 13.170L18.830 16H4V4h16v13.170zM13 5h-2v4H7v2h4v4h2v-4h4V9h-4z"/></svg>
<svg style="left:1012.00px;top:67.00px" width="16" height="16" viewBox="0 0 24 24" fill="#444746" ><path d="M9 17H7v-7h2v7zm4 0h-2V7h2v10zm4 0h-2v-4h2v4zm2 2H5V5h14v14zm0-16H5c-1.100 0-2 .9-2 2v14c0 1.100.9 2 2 2h14c1.100 0 2-.9 2-2V5c0-1.100-.9-2-2-2z"/></svg>
<svg style="left:1038.50px;top:67.00px" width="16" height="16" viewBox="0 0 24 24" fill="#444746" ><path d="M7 6h10l-5.010 6.300L7 6zm-2.750-.39C6.270 8.200 10 13 10 13v6c0 .55.45 1 1 1h2c.55 0 1-.45 1-1v-6s3.720-4.800 5.740-7.390c.51-.66.04-1.610-.79-1.610H5.040c-.83 0-1.300.95-.79 1.610z"/></svg>
<svg style="left:1064.200px;top:67.800px" width="14" height="14" viewBox="0 0 15 15" fill="none" stroke="#444746" stroke-width="1.300"><path d="M1 11V1h10"/><rect x="3.700" y="3.700" width="10.300" height="10.300" rx="1"/><path d="M3.700 7.200H14M3.700 10.600H14M7.200 7.200V14M10.600 7.200V14"/></svg>
<div class="a" style="left:1083.5px;top:72.75px;width:0;height:0;border-left:3.5px solid transparent;border-right:3.5px solid transparent;border-top:3.5px solid #444746"></div>
<svg style="left:1100.50px;top:67.50px" width="15" height="15" viewBox="0 0 24 24" fill="#444746" ><path d="M18 4H6v2l6.500 6L6 18v2h12v-3h-7l5-5-5-5h7z"/></svg>
</div></body></html>
